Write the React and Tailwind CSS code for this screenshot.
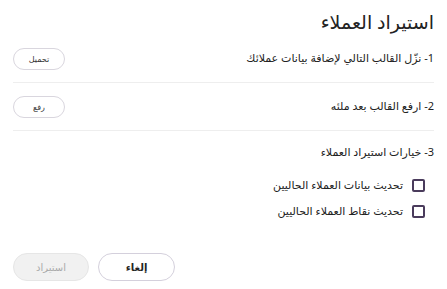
import React from "react";

const rows = [
    { label: "1- نزّل القالب التالي لإضافة بيانات عملائك", action: "تحميل" },
    { label: "2- ارفع القالب بعد ملئه", action: "رفع" },
];

const options = ["تحديث بيانات العملاء الحاليين", "تحديث نقاط العملاء الحاليين"];

export default function App() {
    return (
        <div dir="rtl" className="h-[289px] w-[447px] bg-white px-[13px] font-['Noto_Sans','DejaVu_Sans',sans-serif] text-[#222]">
            <h1 className="pt-[9px] text-[19px] leading-[26px]">استيراد العملاء</h1>

            {rows.map((row) => (
                <div key={row.action} className="flex h-[48px] items-center justify-between border-b border-[#eeeeee]">
                    <span className="text-[11px]">{row.label}</span>
                    <button className="h-[22px] w-[52px] rounded-full border border-[#d9d6de] text-[8px] text-[#333]">
                        {row.action}
                    </button>
                </div>
            ))}

            <p className="pt-[12px] text-[11px] leading-[18px]">3- خيارات استيراد العملاء</p>

            <div className="mt-[15px] flex flex-col gap-[8px] pr-[9px]">
                {options.map((opt) => (
                    <label key={opt} className="flex h-[18px] items-center gap-[9px] text-[11px]">
                        <span className="h-[13px] w-[13px] rounded-[2px] border-2 border-[#4a3b5c]" />
                        {opt}
                    </label>
                ))}
            </div>

            <div className="mt-[33px] flex justify-end gap-[9px]" dir="ltr">
                <button className="h-[28px] w-[76px] rounded-full border border-[#e6e6e6] bg-[#f1f1f1] text-[10px] text-[#aaaaaa]">
                    استيراد
                </button>
                <button className="h-[28px] w-[77px] rounded-full border border-[#d4d0dc] text-[10px] font-semibold text-[#222]">
                    إلغاء
                </button>
                <div className="flex-1" />
            </div>
        </div>
    );
}
